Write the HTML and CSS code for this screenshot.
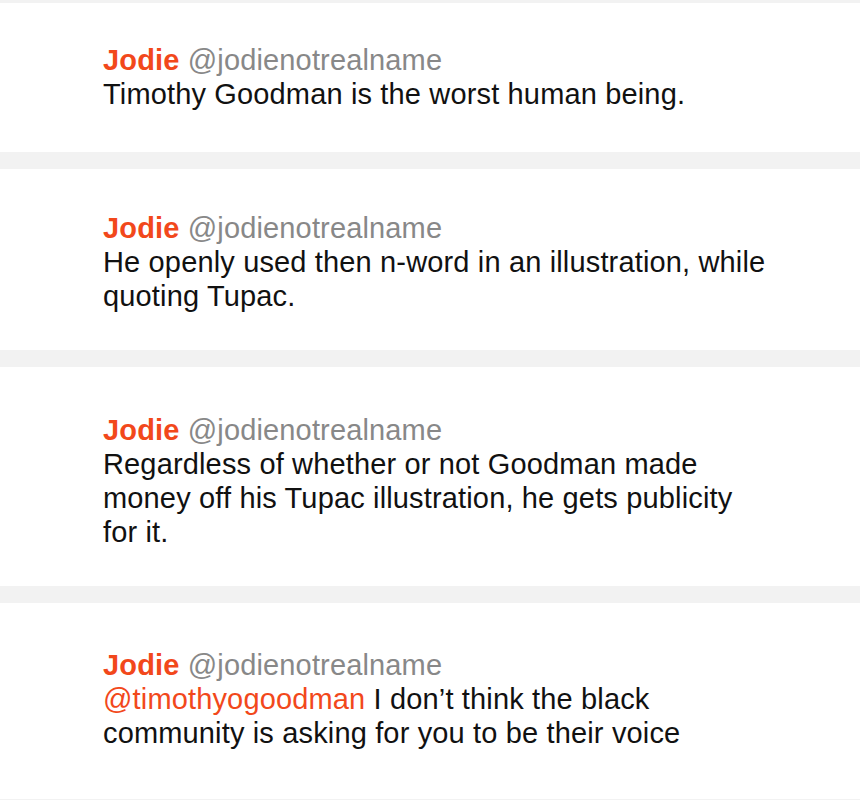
FILE: index.html
```html
<!DOCTYPE html>
<html>
<head>
<meta charset="utf-8">
<link rel="stylesheet" href="styles.css">
</head>
<body>
<div class="feed">
  <div class="tweet t1">
    <div class="head"><span class="name">Jodie</span> <span class="handle">@jodienotrealname</span></div>
    <div class="text">Timothy Goodman is the worst human being.</div>
  </div>
  <div class="tweet t2">
    <div class="head"><span class="name">Jodie</span> <span class="handle">@jodienotrealname</span></div>
    <div class="text">He openly used then n-word in an illustration, while quoting Tupac.</div>
  </div>
  <div class="tweet t3">
    <div class="head"><span class="name">Jodie</span> <span class="handle">@jodienotrealname</span></div>
    <div class="text">Regardless of whether or not Goodman made money off his Tupac illustration, he gets publicity for it.</div>
  </div>
  <div class="tweet t4">
    <div class="head"><span class="name">Jodie</span> <span class="handle">@jodienotrealname</span></div>
    <div class="text"><span class="mention">@timothyogoodman</span> I don’t think the black community is asking for you to be their voice</div>
  </div>
</div>
</body>
</html>
```
FILE: styles.css
```css
html, body {
  margin: 0;
  padding: 0;
  background: #f2f2f2;
}
body {
  font-family: "Liberation Sans", Arial, sans-serif;
  font-size: 29px;
  line-height: 34px;
  letter-spacing: 0.15px;
  color: #111;
}
.feed {
  display: flex;
  flex-direction: column;
  gap: 17px;
  padding-top: 3px;
}
.tweet {
  background: #fff;
  padding: 40px 40px 41px 103px;
}
.tweet .text {
  max-width: 666px;
}
.t2 { padding-top: 42px; padding-bottom: 37px; }
.t3 { padding-top: 46px; padding-bottom: 37px; }
.t4 { padding-top: 45px; padding-bottom: 49px; }
.name {
  color: #f2481b;
  font-weight: bold;
}
.handle {
  color: #888;
}
.mention {
  color: #f2481b;
}
```
